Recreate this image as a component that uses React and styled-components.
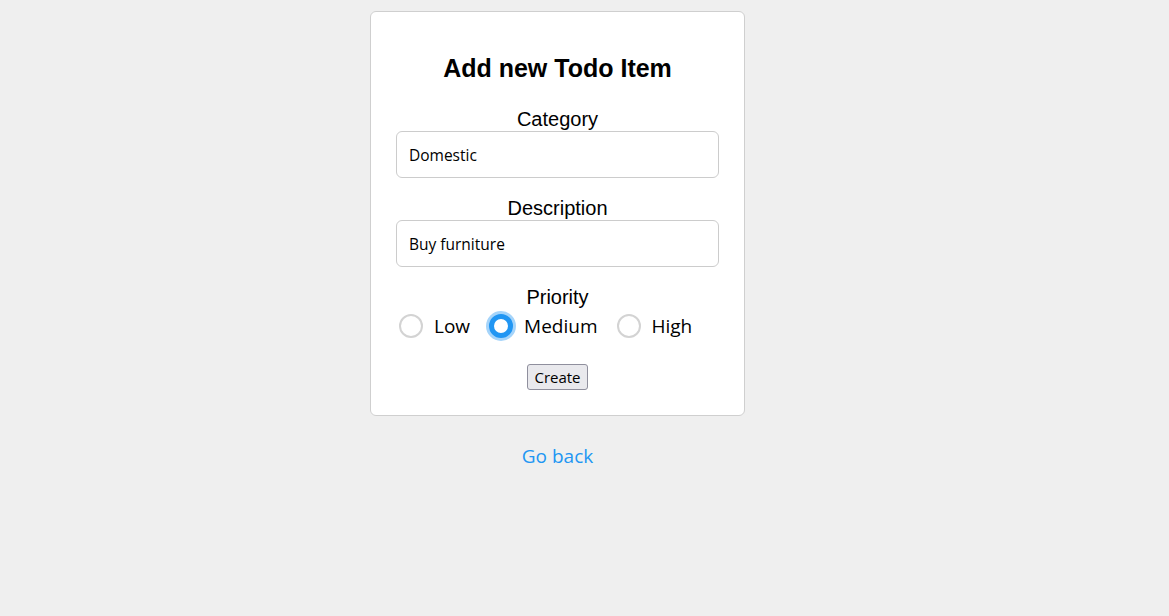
import React, { useState } from 'react'
import styled, { createGlobalStyle } from 'styled-components'

const GlobalStyle = createGlobalStyle`
  body {
    margin: 8px;
    background: #efefef;
    font-family: "Liberation Sans", Arial, sans-serif;
  }
`

const Page = styled.div`
  width: 1099px;
  padding-top: 3px;
  display: flex;
  flex-direction: column;
  align-items: center;
`

const Card = styled.form`
  width: 323px;
  padding: 20px 25px 25px;
  background: #fff;
  border: 1px solid #cfcfcf;
  border-radius: 6px;
  display: flex;
  flex-direction: column;
  align-items: center;
`

const Title = styled.h2`
  margin: 22px 0 26px;
  font-size: 25px;
  font-weight: bold;
  line-height: 28px;
  color: #000;
`

const Field = styled.div`
  width: 100%;
  display: flex;
  flex-direction: column;
  align-items: center;
  margin-bottom: ${p => p.$last ? '0' : '19px'};
`

const Label = styled.label`
  font-size: 20px;
  line-height: 23px;
  color: #000;
`

const Input = styled.input`
  box-sizing: border-box;
  width: 100%;
  height: 47px;
  padding: 0 12px;
  border: 1px solid #cccccc;
  border-radius: 6px;
  font-family: "Open Sans", sans-serif;
  font-size: 15.5px;
  color: #000;
  outline: none;
`

const RadioRow = styled.div`
  align-self: stretch;
  display: flex;
  align-items: center;
  gap: 19px;
  padding: 1px 0 0 3px;
  height: 31px;
`

const Option = styled.label`
  display: flex;
  align-items: center;
  gap: 11px;
  font-family: "Open Sans", sans-serif;
  font-size: 19px;
  color: #000;
  cursor: pointer;
`

const Circle = styled.span`
  box-sizing: border-box;
  width: 24px;
  height: 24px;
  border-radius: 50%;
  border: 2px solid #d3d3d3;
  background: #fff;
  ${p => p.$checked && `
    border: 5px solid #2196f3;
    box-shadow: 0 0 0 3px #a5d4fa;
  `}
`

const Create = styled.button`
  margin-top: 23px;
  height: 26px;
  padding: 0 6px;
  font-family: "Open Sans", sans-serif;
  font-size: 15px;
  color: #000;
  background: #e9e9ed;
  border: 1px solid #8f8f9d;
  border-radius: 3px;
`

const BackLink = styled.a`
  margin-top: 27px;
  font-family: "Open Sans", sans-serif;
  font-size: 19px;
  color: #2196f3;
  text-decoration: none;
`

const priorities = ['Low', 'Medium', 'High']

export default function App() {
    const [category, setCategory] = useState('Domestic')
    const [description, setDescription] = useState('Buy furniture')
    const [priority, setPriority] = useState('Medium')

    return (
        <>
            <GlobalStyle />
            <Page>
                <Card onSubmit={e => e.preventDefault()}>
                    <Title>Add new Todo Item</Title>
                    <Field>
                        <Label>Category</Label>
                        <Input value={category} onChange={e => setCategory(e.target.value)} />
                    </Field>
                    <Field>
                        <Label>Description</Label>
                        <Input value={description} onChange={e => setDescription(e.target.value)} />
                    </Field>
                    <Field $last>
                        <Label>Priority</Label>
                        <RadioRow>
                            {priorities.map(p =>
                                <Option key={p} onClick={() => setPriority(p)}>
                                    <Circle $checked={priority === p} />
                                    {p}
                                </Option>
                            )}
                        </RadioRow>
                    </Field>
                    <Create type="submit">Create</Create>
                </Card>
                <BackLink href="#">Go back</BackLink>
            </Page>
        </>
    )
}
